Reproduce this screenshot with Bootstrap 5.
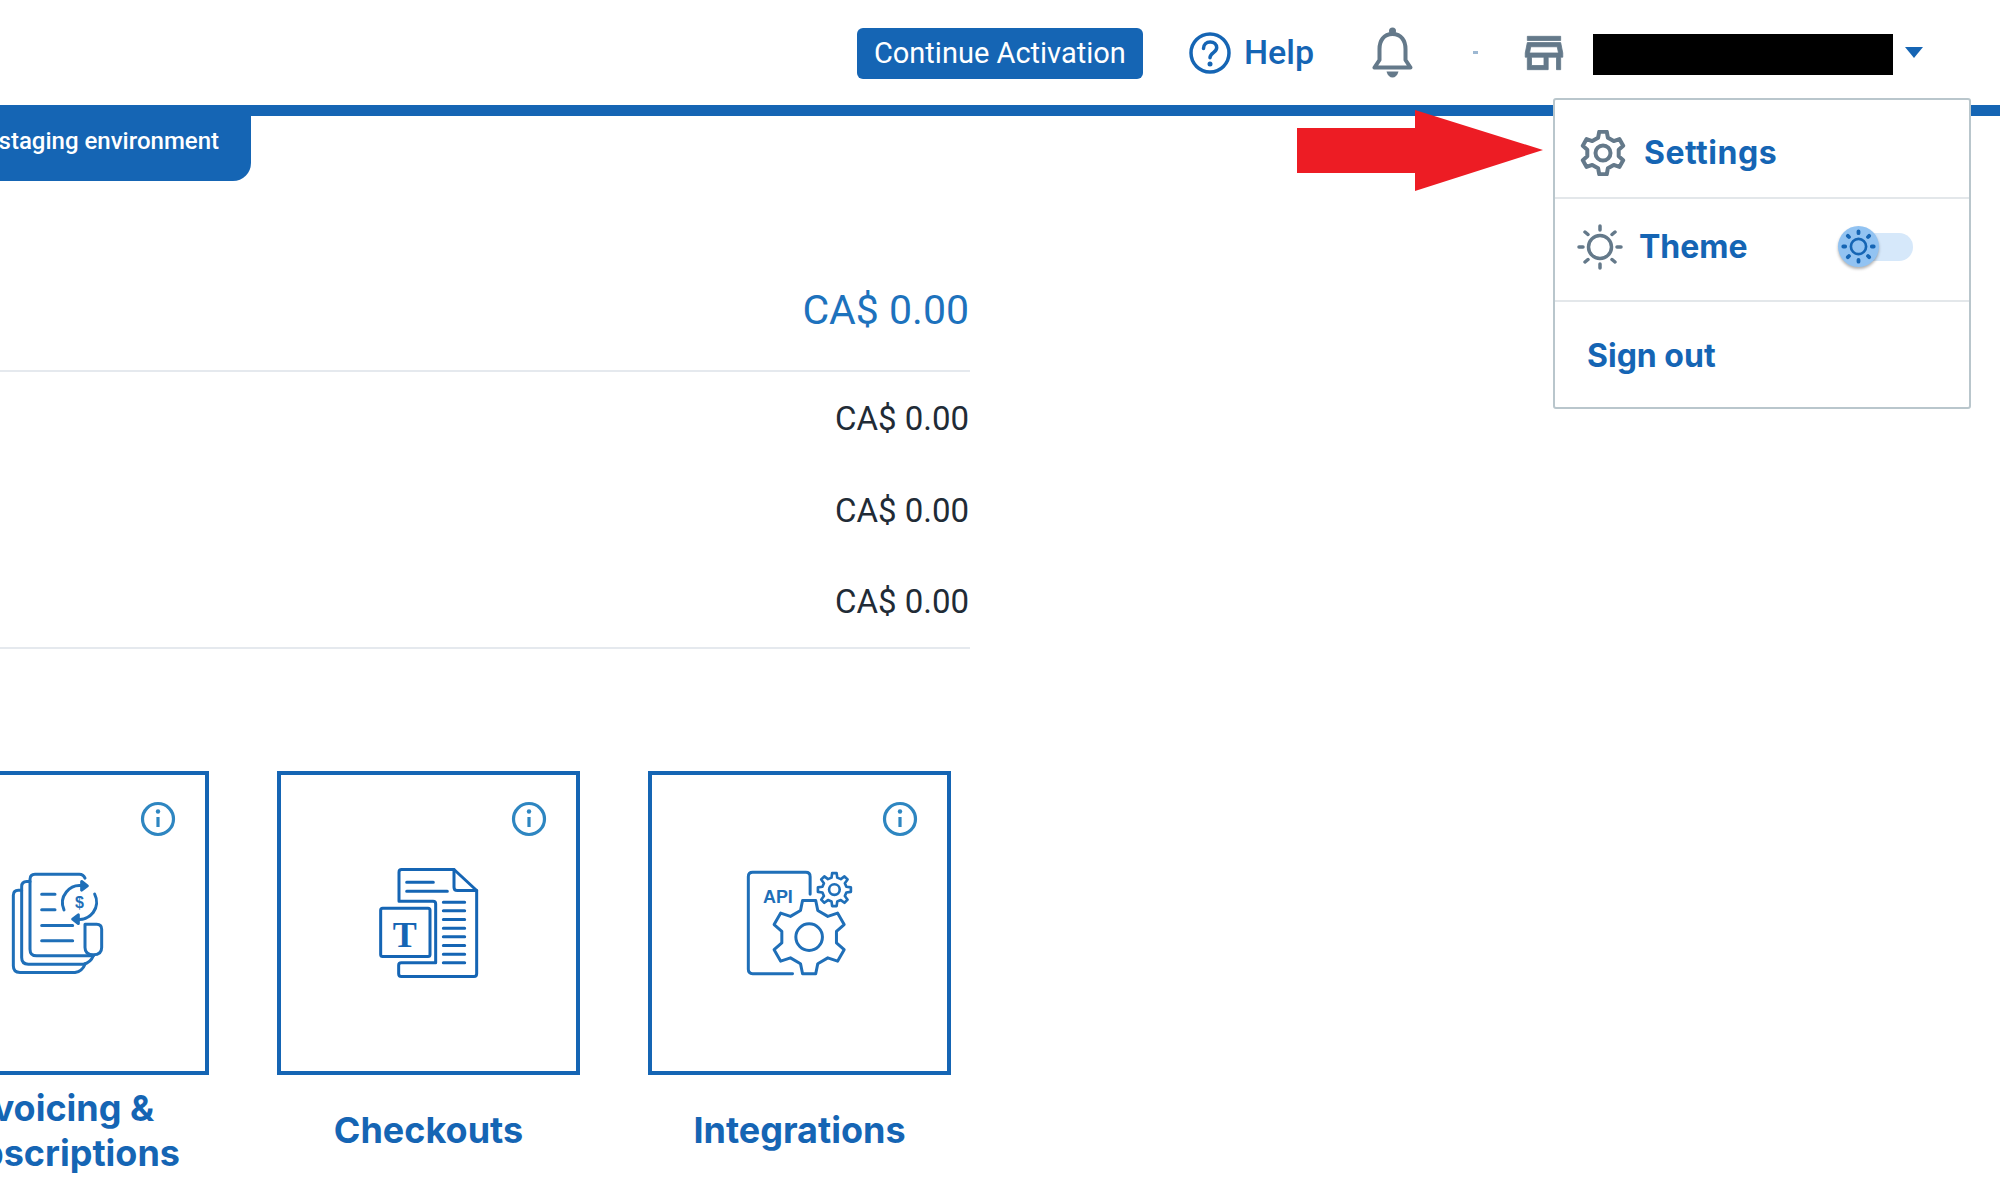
<!DOCTYPE html>
<html lang="en">
<head>
  <meta charset="UTF-8" />
  <meta name="viewport" content="width=device-width, initial-scale=1.0"/>
  <title>Dashboard</title>
  <link href="https://cdn.jsdelivr.net/npm/bootstrap@5.3.2/dist/css/bootstrap.min.css" rel="stylesheet" />
  <style>
    body { background: #fff; overflow: hidden; font-family: Roboto, sans-serif; color: #212b36; }
    .page-wrap { position: relative; height: 1182px; overflow: hidden; }
    .top-head { height: 116px; padding-right: 77px; border-bottom: 11px solid #1565b4; box-sizing: border-box; }
    .btn-activate { width: 286px; height: 51px; margin-right: 46px; margin-top: 2px; padding: 0; background: #1565b4; border: 0; border-radius: 6px; color: #fff; font-size: 29px; line-height: 51px; text-decoration: none; text-align: center; }
    .help-link { color: #1565b4; font-size: 34px; font-weight: 500; text-decoration: none; margin-right: 58px; gap: 13px; }
    .bell-ico { margin-right: 60px; }
    .dot-sep { width: 5px; height: 3px; background: #9db8d2; margin-right: 41px; }
    .store-ico { margin-right: 24px; }
    .name-mask { width: 300px; height: 41px; background: #000; margin-right: 12px; margin-top: 4px; }
    .caret-down { width: 0; height: 0; border-left: 9px solid transparent; border-right: 9px solid transparent; border-top: 11px solid #1565b4; margin-top: 0; }
    .env-tab { width: 251px; height: 65px; padding-right: 32px; padding-bottom: 15px; background: #1565b4; border-bottom-right-radius: 18px; color: #fff; font-size: 24px; font-weight: 500; white-space: nowrap; overflow: hidden; }
    .sum-box { width: 970px; margin-top: 69px; text-align: right; }
    .sum-head { height: 122px; padding-top: 2px; border-bottom: 2px solid #e5e9ee; color: #1d72bd; font-size: 41px; padding-right: 1px; }
    .sum-list { border-bottom: 2px solid #e5e9ee; font-size: 33px; padding-right: 1px; }
    .sum-row { height: 91.500px; padding-top: 2px; }
    .tile-row { margin-left: -94px; margin-top: 122px; gap: 68px; }
    .tile-col { width: 303px; flex: none; }
    .tile-box { height: 304px; border: 4px solid #1565b4; position: relative; }
    .tile-info { position: absolute; top: 26px; right: 29px; }
    .tile-name { height: 92px; margin-top: 10px; color: #1565b4; font-family: Inter, sans-serif; font-size: 36px; font-weight: 700; line-height: 45px; text-align: center; }
    .user-menu { position: absolute; top: 98px; right: 29px; width: 418px; height: 311px; background: #fff; border: 2px solid #b9c6cc; border-radius: 3px; font-family: Inter, sans-serif; font-size: 32px; font-weight: 700; color: #1565b4; }
    .menu-line { border-bottom: 2px solid #e3e7ea; }
    .menu-a { height: 99px; padding-left: 25px; padding-top: 9px; gap: 18px; letter-spacing: .5px; }
    .menu-b { height: 103px; padding-left: 22px; padding-bottom: 6px; gap: 16px; }
    .menu-c { height: 105px; padding-left: 32px; padding-top: 3px; }
    .theme-switch { position: relative; width: 72px; height: 28px; margin-left: auto; margin-right: 56px; background: #d6e8fa; border-radius: 14px; }
    .theme-knob { position: absolute; left: -3px; top: -7px; width: 41px; height: 41px; border-radius: 50%; background: #92c3f2; box-shadow: 0 2px 3px rgba(0,0,0,.3); }
    .red-arrow { position: absolute; left: 1297px; top: 110px; }
    svg { display: block; }
  </style>
</head>
<body>
  <div class="page-wrap">
    <header class="top-head d-flex align-items-center justify-content-end">
      <a href="#" class="btn-activate">Continue Activation</a>
      <a href="#" class="help-link d-flex align-items-center">
        <svg width="42" height="42" viewBox="0 0 42 42" fill="none" stroke="#1565b4" stroke-width="3.500">
          <circle cx="21" cy="21" r="19"/>
          <path d="M14.5 16.5c0-4 3-6.500 6.700-6.500 3.800 0 6.500 2.500 6.500 5.800 0 4.700-6.700 5-6.700 10" stroke-linecap="round"/>
          <circle cx="21" cy="32" r="2.500" fill="#1565b4" stroke="none"/>
        </svg>
        Help
      </a>
      <svg class="bell-ico" width="41" height="51" viewBox="0 0 41 51" fill="none" stroke="#64798a" stroke-width="4">
        <path d="M20.500 7C11.500 7 7.500 14 7.500 22v11L2.500 40.500h36L33.500 33V22C33.500 14 29.500 7 20.500 7Z" stroke-linejoin="round"/>
        <circle cx="20.500" cy="4" r="3.500" fill="#64798a" stroke="none"/>
        <path d="M14.500 44.500h12c-1 4-3.500 6-6 6s-5-2-6-6Z" fill="#64798a" stroke="none"/>
      </svg>
      <span class="dot-sep"></span>
      <svg class="store-ico" width="50" height="50" viewBox="0 0 24 24" fill="#64798a" stroke="#64798a" stroke-width=".4">
        <path d="M18.360 9l.6 3H5.040l.6-3h12.720M20 4H4v2h16V4zm0 3H4l-1 5v2h1v6h10v-6h4v6h2v-6h1v-2l-1-5zM6 18v-4h6v4H6z"/>
      </svg>
      <span class="name-mask"></span>
      <span class="caret-down"></span>
    </header>

    <div class="env-tab d-flex align-items-center justify-content-end">staging environment</div>

    <section class="sum-box">
      <div class="sum-head d-flex align-items-center justify-content-end">CA$ 0.00</div>
      <div class="sum-list">
        <div class="sum-row d-flex align-items-center justify-content-end">CA$ 0.00</div>
        <div class="sum-row d-flex align-items-center justify-content-end">CA$ 0.00</div>
        <div class="sum-row d-flex align-items-center justify-content-end">CA$ 0.00</div>
      </div>
    </section>

    <section class="tile-row d-flex">
      <div class="tile-col">
        <div class="tile-box d-flex align-items-center justify-content-center">
          <svg class="tile-info" width="36" height="36" viewBox="0 0 36 36" fill="none" stroke="#2e86c1" stroke-width="3.200"><circle cx="18" cy="18" r="15.500"/><path d="M18 16v10"/><circle cx="18" cy="10.500" r="2.200" fill="#2e86c1" stroke="none"/></svg>
          <svg width="95" height="107" viewBox="30 325 285 320" fill="none" stroke="#1f6fb8" stroke-width="9" stroke-linecap="round" stroke-linejoin="round">
            <path d="M255 352Q250 340 238 340H105Q90 340 90 355V565Q90 585 110 585H280"/>
            <path d="M255 490H290Q305 490 305 505V560Q305 582 280 582Q255 582 255 560V490"/>
            <path d="M90 362H80Q65 362 65 377V590Q65 610 85 610H250Q272 606 280 585"/>
            <path d="M65 388H55Q40 388 40 403V615Q40 635 60 635H225Q247 631 255 610"/>
            <path d="M125 400H165M125 447H165M125 494H218M125 540H218"/>
            <path d="M192 447A52 52 0 0 1 250 375M284 400A52 52 0 0 1 228 475"/>
            <path d="M245 362L262 375L245 388ZM235 462L218 475L235 488Z" fill="#1f6fb8"/>
            <text x="238" y="443" font-family="Liberation Sans, sans-serif" font-size="48" font-weight="700" text-anchor="middle" fill="#1f6fb8" stroke="none">$</text>
          </svg>
        </div>
        <div class="tile-name d-flex align-items-center justify-content-center">Invoicing &amp;<br>Subscriptions</div>
      </div>
      <div class="tile-col">
        <div class="tile-box d-flex align-items-center justify-content-center">
          <svg class="tile-info" width="36" height="36" viewBox="0 0 36 36" fill="none" stroke="#2e86c1" stroke-width="3.200"><circle cx="18" cy="18" r="15.500"/><path d="M18 16v10"/><circle cx="18" cy="10.500" r="2.200" fill="#2e86c1" stroke="none"/></svg>
          <svg width="100" height="112" viewBox="25 80 300 335" fill="none" stroke="#1565b4" stroke-width="9" stroke-linecap="round" stroke-linejoin="round">
            <path d="M85 182V95Q85 87 93 87H250L318 150V400Q318 408 310 408H92Q84 408 84 400V374Q84 367 92 367H195V190Q195 182 187 182H85"/>
            <path d="M250 87V140Q250 150 260 150H318"/>
            <path d="M108 125H188M108 152H230"/>
            <path d="M218 185H282M218 211H282M218 237H282M218 263H282M218 289H282M218 315H282M218 341H282M218 367H282"/>
            <rect x="30" y="203" width="148" height="145" rx="6"/>
            <text x="102" y="320" font-family="Liberation Serif, serif" font-size="108" font-weight="700" text-anchor="middle" fill="#1565b4" stroke="none">T</text>
          </svg>
        </div>
        <div class="tile-name d-flex align-items-center justify-content-center">Checkouts</div>
      </div>
      <div class="tile-col">
        <div class="tile-box d-flex align-items-center justify-content-center">
          <svg class="tile-info" width="36" height="36" viewBox="0 0 36 36" fill="none" stroke="#2e86c1" stroke-width="3.200"><circle cx="18" cy="18" r="15.500"/><path d="M18 16v10"/><circle cx="18" cy="10.500" r="2.200" fill="#2e86c1" stroke="none"/></svg>
          <svg width="112" height="108" viewBox="40 90 335 325" fill="none" stroke="#1f6fb8" stroke-width="9" stroke-linecap="round" stroke-linejoin="round">
            <path d="M238 166V113Q238 100 225 100H65Q52 100 52 113V392Q52 405 65 405H185"/>
            <text x="96" y="192" font-family="Liberation Sans, sans-serif" font-size="56" font-weight="700" fill="#1f6fb8" stroke="none" textLength="90" lengthAdjust="spacingAndGlyphs">API</text>
            <path class="gear-path" data-gear="235,295,112,84,6" fill="#fff"/>
            <circle cx="235" cy="295" r="40"/>
            <path class="gear-path" data-gear="311,152,50,37,8" fill="#fff" stroke-width="8"/>
            <circle cx="311" cy="152" r="16" stroke-width="8"/>
          </svg>
        </div>
        <div class="tile-name d-flex align-items-center justify-content-center">Integrations</div>
      </div>
    </section>

    <!-- menu is open over the page -->
    <div class="user-menu">
      <div class="menu-a menu-line d-flex align-items-center">
        <svg width="46" height="46" viewBox="0 0 46 46" fill="none" stroke="#64798a" stroke-width="4" stroke-linejoin="round">
          <path class="gear-path" data-gear="23,23,21.500,16,6"/>
          <circle cx="23" cy="23" r="7.500"/>
        </svg>
        Settings
      </div>
      <div class="menu-b menu-line d-flex align-items-center">
        <svg width="46" height="46" viewBox="0 0 46 46" fill="none" stroke="#64798a" stroke-width="3.500" stroke-linecap="round">
          <circle cx="23" cy="23" r="11.500"/>
          <path d="M23 2v4M23 40v4M2 23h4M40 23h4M8 8l3 2.500M38 8l-3 2.500M8 38l3-2.500M38 38l-3-2.500"/>
        </svg>
        Theme
        <div class="theme-switch">
          <div class="theme-knob d-flex align-items-center justify-content-center">
            <svg width="35" height="35" viewBox="0 0 46 46" fill="none" stroke="#1565b4" stroke-width="3.500" stroke-linecap="round">
              <circle cx="23" cy="23" r="10"/>
              <path d="M23 3v2.500M23 40.500V43M3 23h2.500M40.500 23H43M9 9l1.500 1.500M37 9l-1.500 1.500M9 37l1.500-1.500M37 37l-1.500-1.500" stroke-width="5"/>
            </svg>
          </div>
        </div>
      </div>
      <div class="menu-c d-flex align-items-center">Sign out</div>
    </div>

    <svg class="red-arrow" width="246" height="81" viewBox="0 0 246 81">
      <polygon points="0,18 118,18 118,0 246,40 118,81 118,63 0,63" fill="#ed1c24"/>
    </svg>
  </div>

  <script>
    // gear outlines: cx, cy, outer radius, inner radius, teeth
    document.querySelectorAll('.gear-path').forEach(el => {
      const [cx, cy, ro, ri, n] = el.dataset.gear.split(',').map(Number);
      const pitch = 2 * Math.PI / n;
      const pts = [];
      for (let i = 0; i < n; i++) {
        const a = -Math.PI / 2 + i * pitch;
        [[ri, -0.3], [ro, -0.17], [ro, 0.17], [ri, 0.3]].forEach(([r, s]) => {
          pts.push((cx + r * Math.cos(a + s * pitch)).toFixed(1) + ' ' + (cy + r * Math.sin(a + s * pitch)).toFixed(1));
        });
      }
      el.setAttribute('d', 'M' + pts.join('L') + 'Z');
    });
  </script>
  <script src="https://cdn.jsdelivr.net/npm/bootstrap@5.3.2/dist/js/bootstrap.bundle.min.js"></script>
</body>
</html>
